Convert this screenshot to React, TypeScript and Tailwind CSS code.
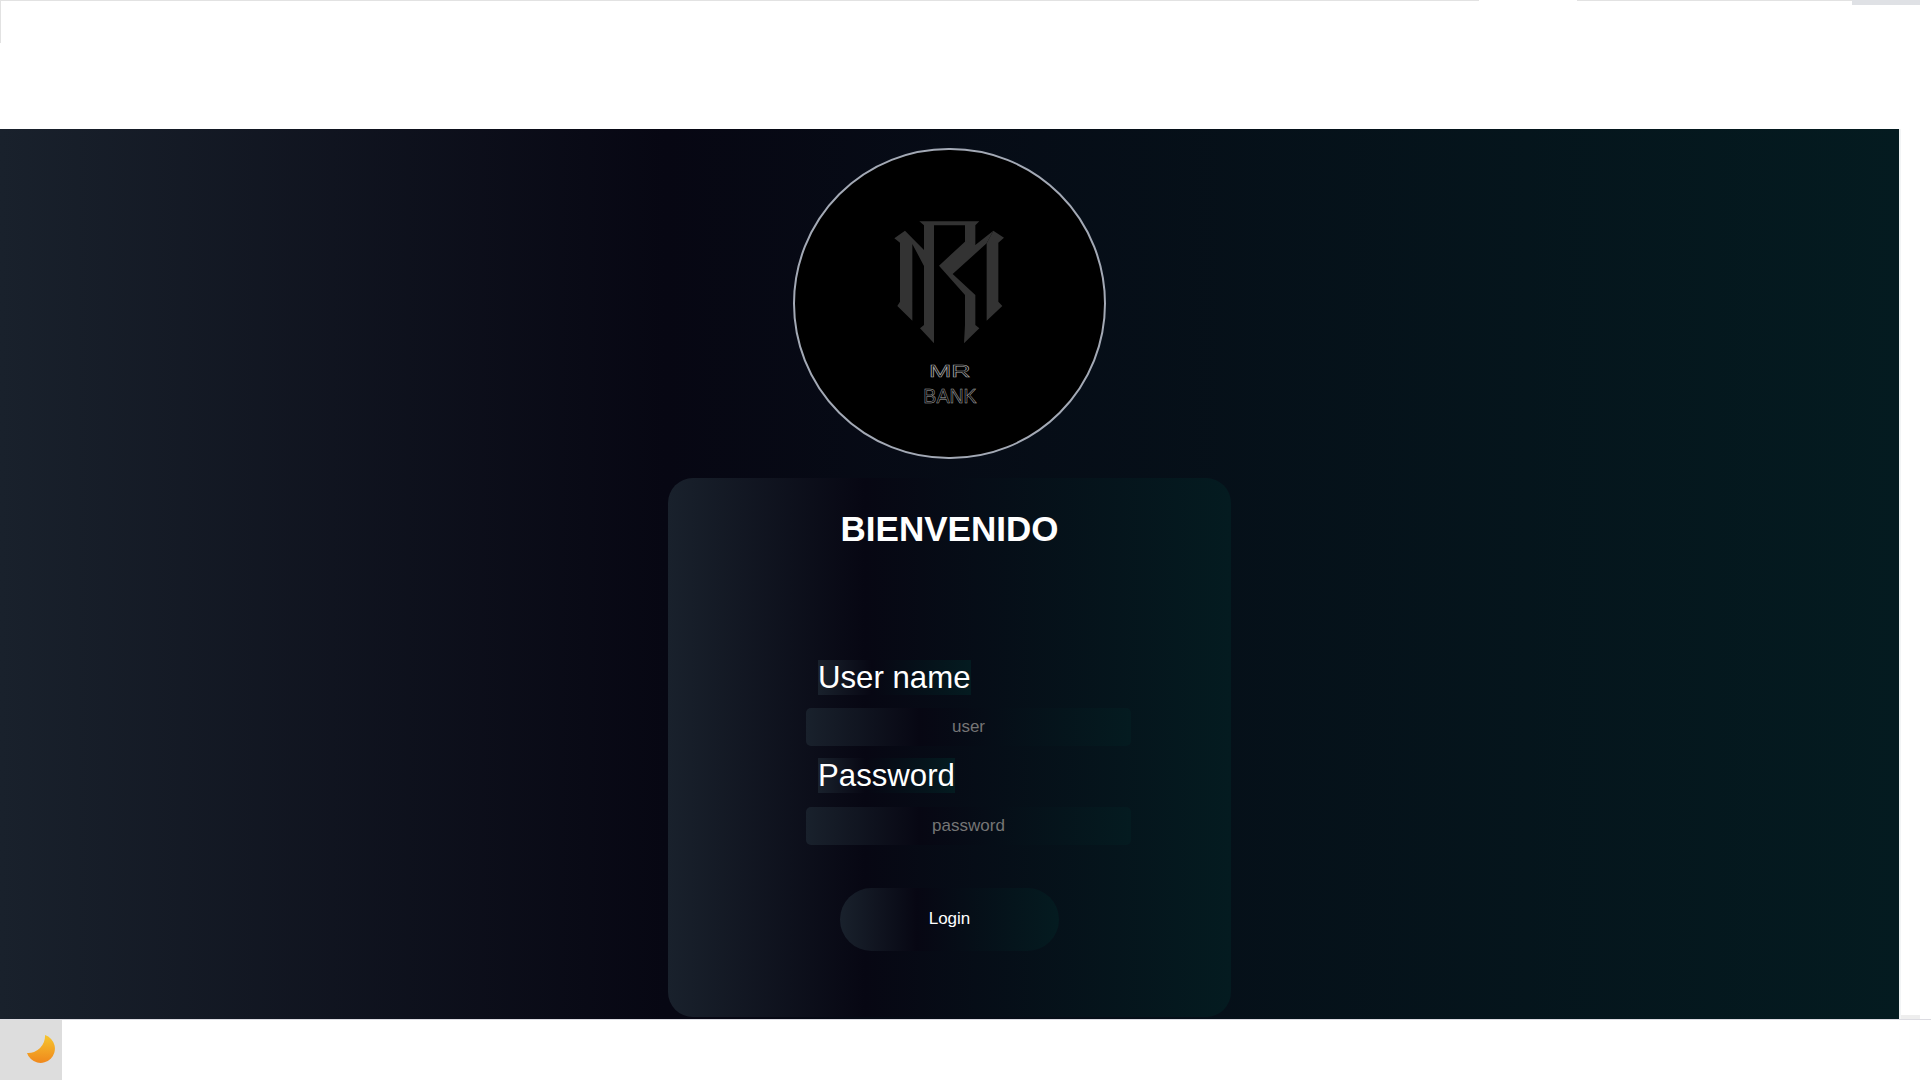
import React from 'react';

const brandGradient = 'bg-[linear-gradient(to_right,#19212c,#070713_35%,#041b20)]';

const fieldClass = `h-[38px] w-[325px] rounded-[5px] text-center text-[17px] text-white outline-none placeholder:text-[#757575] ${brandGradient}`;
const labelClass = `ml-3 inline-block self-start text-[31.2px] leading-[35px] text-white ${brandGradient}`;

const Logo: React.FC = () => (
  <svg width="180" height="220" viewBox="0 0 540 660" className="mt-[10px]">
    <g fill="#333333" transform="translate(0 3)">
      {/* left stem */}
      <polygon points="103,115 135,92 192,150 192,198 157,132 157,362 112,318 120,305 120,128" />
      {/* top bar, centre stem and right leg of the R */}
      <polygon points="178,64 358,64 346,76 346,150 315,178 315,76 222,76 222,430 180,385 192,375 192,76" />
      {/* arm and leg of the R */}
      <polygon points="237,197 318,122 346,135 400,92 380,130 278,222 346,285 346,375 358,385 312,430 315,375 315,285" />
      {/* right stem */}
      <polygon points="400,92 432,113 415,128 415,305 427,318 380,362 380,130" />
    </g>
    <g fill="none" stroke="#a8a8a8" strokeWidth="1.6" fontFamily="'Liberation Sans', sans-serif">
      <text x="207" y="533" fontSize="50" textLength="125" lengthAdjust="spacingAndGlyphs">MR</text>
      <text x="190" y="612" fontSize="63" textLength="160" lengthAdjust="spacingAndGlyphs">BANK</text>
    </g>
  </svg>
);

const Moon: React.FC = () => (
  <svg width="62" height="60" viewBox="0 0 62 60">
    <defs>
      <linearGradient id="moon" x1="0" y1="0" x2="0" y2="1">
        <stop offset="0" stopColor="#f6c62f" />
        <stop offset="1" stopColor="#f0881c" />
      </linearGradient>
    </defs>
    <path d="M45 15 A14.3 14.3 0 1 1 27 33 A17 17 0 0 0 45 15 Z" fill="url(#moon)" />
  </svg>
);

const App: React.FC = () => {
  return (
    <div className="h-[1088px] w-[1931px] overflow-hidden bg-white font-['Liberation_Sans',Arial,sans-serif]">
      <header className="flex h-[129px] items-start">
        <div className="h-[43px] w-px bg-[#e2e2e2]" />
        <div className="h-px w-[1478px] bg-[#e2e2e2]" />
        <div className="w-[98px]" />
        <div className="h-px w-[275px] bg-[#e2e2e2]" />
        <div className="h-[5px] w-[68px] bg-[#dfe1e5]" />
      </header>

      <div className="flex h-[891px] items-stretch border-b border-[#dcdce2]">
        <main className={`flex w-[1899px] flex-col items-center pt-[19px] ${brandGradient}`}>
          <div className="flex h-[311px] w-[313px] shrink-0 items-center justify-center rounded-full border-2 border-[#a3a9b5] bg-black">
            <Logo />
          </div>

          <div className={`mt-[19px] flex h-[539px] w-[563px] shrink-0 flex-col rounded-[25px] ${brandGradient}`}>
            <h1 className="mt-[31px] text-center text-[35px] leading-10 font-bold text-white">BIENVENIDO</h1>
            <form className="mt-[111px] ml-[138px] flex flex-col">
              <label className={labelClass}>User name</label>
              <input className={`mt-[13px] ${fieldClass}`} placeholder="user" />
              <label className={`mt-3 ${labelClass}`}>Password</label>
              <input className={`mt-[14px] ${fieldClass}`} placeholder="password" type="password" />
            </form>
            <button className={`mx-auto mt-[43px] h-[63px] w-[219px] rounded-[32px] pb-[2px] text-[17px] text-white ${brandGradient}`}>
              Login
            </button>
          </div>
        </main>
        <aside className="flex w-[21px] flex-col justify-end border-l-2 border-[#f2f4f5]">
          <div className="h-[4px] bg-[#eeeeee]" />
        </aside>
      </div>

      <button className="block h-[60px] w-[62px] bg-[#dddddd]">
        <Moon />
      </button>
    </div>
  );
};

export default App;
